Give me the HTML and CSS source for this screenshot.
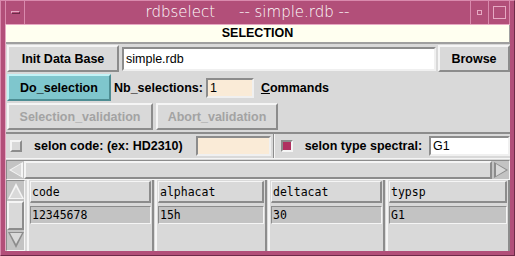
FILE: index.html
```html
<!DOCTYPE html>
<html lang="en">
<head>
    <meta charset="UTF-8">
    <title>rdbselect</title>
    <link rel="stylesheet" href="styles.css">
</head>
<body>
    <div class="window">
        <div class="titlebar">
            <div class="menu-btn"><span class="dash"></span></div>
            <div class="title">rdbselect&nbsp;&nbsp;&nbsp;&nbsp;&nbsp;-- simple.rdb --</div>
            <div class="icon-btn"><span class="dot"></span></div>
            <div class="max-btn"><span class="box"></span></div>
        </div>
        <div class="content">
            <div class="header">SELECTION</div>

            <div class="row">
                <button class="btn init">Init Data Base</button>
                <div class="entry file">simple.rdb</div>
                <button class="btn browse">Browse</button>
            </div>

            <div class="row">
                <button class="btn do">Do_selection</button>
                <span class="label nb">Nb_selections:</span>
                <div class="entry linen nbsel">1</div>
                <span class="label cmd"><u>C</u>ommands</span>
            </div>

            <div class="row">
                <button class="btn disabled selval">Selection_validation</button>
                <button class="btn disabled abort">Abort_validation</button>
            </div>

            <div class="options">
                <span class="check"></span>
                <span class="label code">selon code: (ex: HD2310)</span>
                <div class="entry linen codeval"></div>
                <span class="sep"></span>
                <span class="check on"></span>
                <span class="label typ">selon type spectral:</span>
                <div class="entry typval">G1</div>
            </div>

            <div class="hscroll">
                <span class="arrow left"></span>
                <span class="trough"></span>
                <span class="arrow right"></span>
            </div>

            <div class="table">
                <div class="vscroll">
                    <span class="arrow up"></span>
                    <span class="vtrough"></span>
                    <span class="arrow down"></span>
                </div>
                <div class="col c1">
                    <div class="cell head">code</div>
                    <div class="cell data">12345678</div>
                </div>
                <div class="col c2">
                    <div class="cell head">alphacat</div>
                    <div class="cell data">15h</div>
                </div>
                <div class="col c3">
                    <div class="cell head">deltacat</div>
                    <div class="cell data">30</div>
                </div>
                <div class="col c4">
                    <div class="cell head">typsp</div>
                    <div class="cell data">G1</div>
                </div>
            </div>
        </div>
    </div>
</body>
</html>
```

FILE: styles.css
```css
body {
    margin: 0;
    background: #d9d9d9;
    font-family: 'Liberation Sans', Arial, sans-serif;
}

.window {
    width: 515px;
    height: 256px;
    box-sizing: border-box;
    background: #b24f79;
    border-top: 1px solid #d98aad;
    border-left: 1px solid #d98aad;
    border-right: 1px solid #6e2a48;
    border-bottom: 1px solid #6e2a48;
    padding: 0 4px 4px 4px;
    display: flex;
    flex-direction: column;
}

.titlebar {
    height: 23px;
    display: flex;
    align-items: stretch;
    color: #fff;
}

.menu-btn {
    width: 18px;
    border-left: 1px solid #d98aad;
    border-right: 1px solid #d98aad;
    display: flex;
    align-items: center;
    justify-content: center;
}

.dash {
    width: 9px;
    height: 3px;
    border-top: 1px solid #e6a9c3;
    border-left: 1px solid #e6a9c3;
    border-bottom: 1px solid #6e2a48;
    border-right: 1px solid #6e2a48;
    box-sizing: border-box;
}

.title {
    flex: 1;
    text-align: center;
    font-family: 'DejaVu Sans', sans-serif;
    font-size: 15px;
    font-weight: 200;
    line-height: 23px;
}

.icon-btn, .max-btn {
    width: 17px;
    display: flex;
    align-items: center;
    justify-content: center;
    border-left: 1px solid #d98aad;
}

.max-btn {
    width: 20px;
    border-right: 1px solid #d98aad;
}

.dot {
    width: 3px;
    height: 3px;
    border: 1px solid #e6a9c3;
}

.box {
    width: 11px;
    height: 11px;
    border: 1px solid #e6a9c3;
}

.content {
    flex: 1;
    background: #d9d9d9;
    border-top: 1px solid #e6a9c3;
    border-left: 1px solid #e6a9c3;
    display: flex;
    flex-direction: column;
    font-size: 12.5px;
    font-weight: bold;
    color: #000;
}

.header {
    height: 17px;
    line-height: 17px;
    background: #fffff0;
    text-align: center;
    border-bottom: 2px solid #9f9f9f;
    border-right: 1px solid #9f9f9f;
}

.row {
    display: flex;
    align-items: center;
    height: 29px;
    padding-left: 1px;
}

.btn {
    font-family: inherit;
    font-size: 12.5px;
    font-weight: bold;
    height: 27px;
    padding: 0;
    background: #d9d9d9;
    color: #000;
    border: 2px solid;
    border-color: #f5f5f5 #8c8c8c #8c8c8c #f5f5f5;
}

.init { width: 112px; }
.browse { width: 72px; margin-left: 2px; }
.do { width: 104px; background: #7fc6cd; border-color: #c2f2f6 #4e8d93 #4e8d93 #c2f2f6; }
.disabled { color: #a3a3a3; }
.selval { width: 146px; }
.abort { width: 122px; margin-left: 3px; }

.entry {
    height: 20px;
    box-sizing: border-box;
    background: #fff;
    border: 2px solid;
    border-color: #8c8c8c #f0f0f0 #f0f0f0 #8c8c8c;
    font-weight: normal;
    font-size: 12.5px;
    padding-left: 2px;
    line-height: 16px;
}

.file { flex: 1; margin-left: 3px; height: 24px; line-height: 20px; }
.linen { background: #faebd7; }
.nbsel { width: 48px; margin-left: 3px; }

.label { white-space: nowrap; }
.nb { margin-left: 3px; }
.cmd { margin-left: 7px; }

.options {
    display: flex;
    align-items: center;
    height: 24px;
    margin-top: 1px;
    border-top: 2px solid #8c8c8c;
    border-bottom: 1px solid #f5f5f5;
    padding-left: 4px;
}

.check {
    width: 8px;
    height: 8px;
    background: #d9d9d9;
    border: 2px solid;
    border-color: #f5f5f5 #8c8c8c #8c8c8c #f5f5f5;
}

.check.on {
    background: #b03060;
    border-color: #8c8c8c #f5f5f5 #f5f5f5 #8c8c8c;
}

.code { margin-left: 12px; }
.codeval { width: 75px; margin-left: 13px; }
.sep {
    width: 0;
    height: 24px;
    border-left: 1px solid #8c8c8c;
    border-right: 1px solid #f5f5f5;
    margin-left: 2px;
    margin-right: 6px;
}
.typ { margin-left: 12px; }
.typval { flex: 1; margin-left: 7px; }

.hscroll {
    display: flex;
    height: 18px;
    margin-top: 1px;
    border: 1px solid;
    border-color: #8c8c8c #f5f5f5 #f5f5f5 #8c8c8c;
    background: #c3c3c3;
}

.trough {
    flex: 1;
    background: #d9d9d9;
    border: 2px solid;
    border-color: #f5f5f5 #8c8c8c #8c8c8c #f5f5f5;
}

.arrow {
    width: 17px;
    position: relative;
}

.arrow::before, .arrow::after {
    content: "";
    position: absolute;
    width: 0;
    height: 0;
}

.left::before {
    left: 2px; top: 1px;
    border-top: 8px solid transparent;
    border-bottom: 8px solid transparent;
    border-right: 14px solid #f5f5f5;
}

.left::after {
    left: 4px; top: 3px;
    border-top: 6px solid transparent;
    border-bottom: 6px solid transparent;
    border-right: 10px solid #d9d9d9;
}

.right::before {
    right: 1px; top: 1px;
    border-top: 8px solid transparent;
    border-bottom: 8px solid transparent;
    border-left: 14px solid #8c8c8c;
}

.right::after {
    right: 3px; top: 3px;
    border-top: 6px solid transparent;
    border-bottom: 6px solid transparent;
    border-left: 10px solid #d9d9d9;
}

.table {
    flex: 1;
    display: flex;
    font-family: 'DejaVu Sans Mono', monospace;
    font-weight: normal;
    font-size: 11.5px;
}

.vscroll {
    width: 17px;
    display: flex;
    flex-direction: column;
    background: #c3c3c3;
    border: 1px solid;
    border-color: #8c8c8c #f5f5f5 #f5f5f5 #8c8c8c;
}

.vscroll .arrow {
    width: auto;
    height: 20px;
}

.vtrough {
    flex: 1;
    background: #d9d9d9;
    border: 2px solid;
    border-color: #f5f5f5 #8c8c8c #8c8c8c #f5f5f5;
}

.up::before {
    left: 1px; top: 2px;
    border-left: 8px solid transparent;
    border-right: 8px solid transparent;
    border-bottom: 16px solid #f5f5f5;
}

.up::after {
    left: 3px; top: 6px;
    border-left: 6px solid transparent;
    border-right: 6px solid transparent;
    border-bottom: 11px solid #d9d9d9;
}

.down::before {
    left: 1px; bottom: 2px;
    border-left: 8px solid transparent;
    border-right: 8px solid transparent;
    border-top: 16px solid #8c8c8c;
}

.down::after {
    left: 3px; bottom: 6px;
    border-left: 6px solid transparent;
    border-right: 6px solid transparent;
    border-top: 11px solid #d9d9d9;
}

.col {
    display: flex;
    flex-direction: column;
    border-left: 2px solid #f5f5f5;
    border-right: 2px solid #8c8c8c;
    padding: 1px 1px 0 1px;
    margin-left: 1px;
}

.c1 { width: 121px; margin-left: 2px; }
.c2 { width: 106px; }
.c3 { width: 111px; }
.c4 { flex: 1; }

.cell {
    padding-left: 1px;
    box-sizing: border-box;
    border: 2px solid;
    margin-bottom: 3px;
}

.head {
    border-color: #f5f5f5 #8c8c8c #8c8c8c #f5f5f5;
    border-width: 1px 2px 2px 1px;
    height: 22px;
    line-height: 21px;
}

.data {
    background: #c3c3c3;
    border-width: 1px;
    border-color: #8c8c8c #f5f5f5 #f5f5f5 #8c8c8c;
    height: 18px;
    line-height: 16px;
}
```
